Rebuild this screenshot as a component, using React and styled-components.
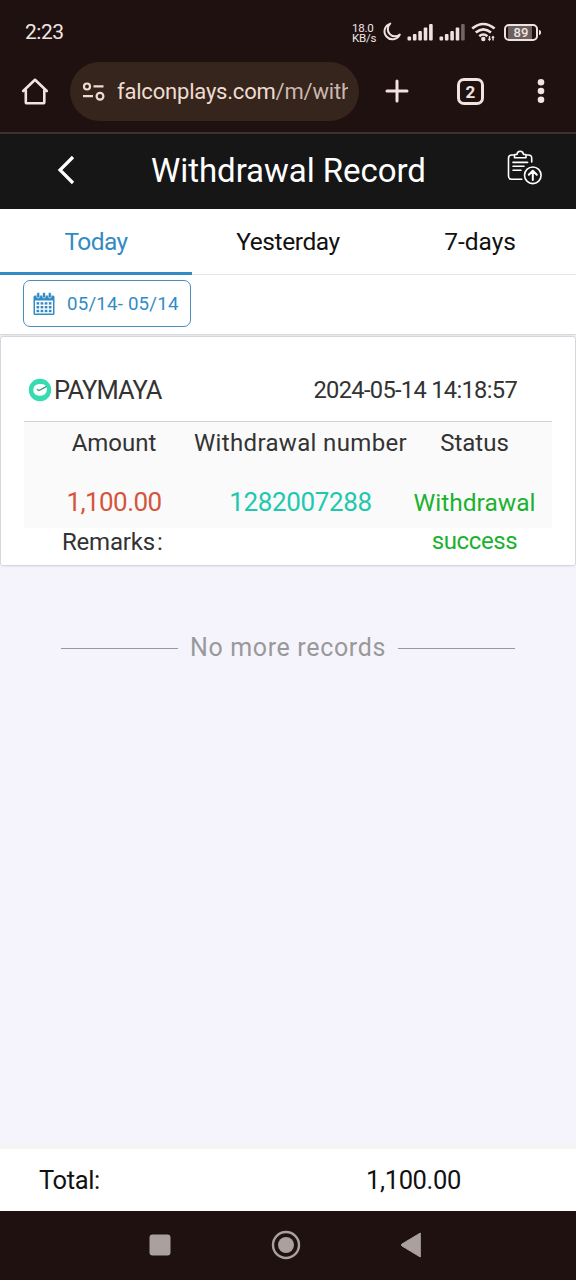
import React, { useState } from 'react';
import styled, { createGlobalStyle } from 'styled-components';

const tabList = [
  { id: 'today', title: 'Today', size: 24.5, spacing: -0.6 },
  { id: 'yesterday', title: 'Yesterday', size: 24.5, spacing: -0.4 },
  { id: 'week', title: '7-days', size: 24.5, spacing: 0 },
];

const record = {
  method: 'PAYMAYA',
  date: '2024-05-14 14:18:57',
  amount: '1,100.00',
  number: '1282007288',
};

const App = () => {
  const [activeTab, setActiveTab] = useState('today');

  return (
    <Screen>
      <GlobalStyle />
      <StatusBar />
      <BrowserBar />
      <Header>
        <BackIcon />
        <Text size={33} spacing={-0.05}>Withdrawal Record</Text>
        <ReportIcon />
      </Header>
      <Tabs>
        {tabList.map(tab => (
          <Tab key={tab.id} $active={tab.id === activeTab} onClick={() => setActiveTab(tab.id)}>
            <Text size={tab.size} spacing={tab.spacing}>{tab.title}</Text>
          </Tab>
        ))}
      </Tabs>
      <Filter>
        <DateButton>
          <CalendarIcon />
          <Text size={18.7} spacing={0.2}>05/14- 05/14</Text>
        </DateButton>
      </Filter>
      <Content>
        <RecordCard content={record} />
        <EndOfList>
          <Rule />
          <Text size={25} spacing={0.65}>No more records</Text>
          <Rule />
        </EndOfList>
      </Content>
      <Summary>
        <Text size={25.5} spacing={-0.4}>Total:</Text>
        <Text size={25.5} spacing={-0.35}>1,100.00</Text>
      </Summary>
      <NavigationBar />
    </Screen>
  );
};

export default App;

const StatusBar = () => (
  <StatusWrapper>
    <Text size={21} spacing={-0.5}>2:23</Text>
    <StatusIcons>
      <Speed>
        <span>18.0</span>
        <span>KB/s</span>
      </Speed>
      <svg width="20" height="20" viewBox="0 0 20 20" fill="none" stroke="#efe3e1" strokeWidth="2" strokeLinejoin="round">
        <path d="M8.3 1.6A8 8 0 1 0 17.8 12.6A7.2 7.2 0 0 1 8.3 1.6Z" />
      </svg>
      <Signal strength={5} />
      <Signal strength={4} />
      <svg width="26" height="20" viewBox="0 0 26 20" fill="none" stroke="#efe3e1" strokeWidth="2.6">
        <path d="M1.2 6.6Q12.3-2.6 23.6 6.6" />
        <path d="M4.8 10.6Q12.3 4.2 20 10.6" />
        <path d="M8.3 14.2Q12.3 10.8 16.4 14.2" />
        <circle cx="12.3" cy="17" r="2.2" fill="#efe3e1" stroke="none" />
        <path d="M18.5 14V18M22 14.5V18.5" strokeWidth="1.4" />
        <path d="M16.7 16.7h3.4l-1.6 2.6zM20.3 16h3.4l-1.7-2.6z" fill="#efe3e1" stroke="none" />
      </svg>
      <Battery>89</Battery>
    </StatusIcons>
  </StatusWrapper>
);

const Signal = ({ strength }) => (
  <svg width="27" height="18" viewBox="0 0 27 18" fill="#efe3e1">
    {[4, 6.5, 9.5, 13, 16.5].map((height, i) => (
      <rect key={height} x={0.5 + i * 5.4} y={17.5 - height} width="3.6" height={height} rx="1" opacity={i < strength ? 1 : 0.4} />
    ))}
  </svg>
);

const BrowserBar = () => (
  <BrowserWrapper>
    <svg width="28" height="28" viewBox="0 0 28 28" fill="none" stroke="#f3e3e0" strokeWidth="2.6" strokeLinejoin="round" strokeLinecap="round">
      <path d="M2.2 14L14 2.8L25.8 14M4.8 13V25Q4.8 26.3 6.1 26.3H22Q23.3 26.3 23.3 25V13" />
    </svg>
    <AddressBar>
      <svg width="24" height="20" viewBox="0 0 24 20" fill="none" stroke="#f0dccf" strokeWidth="2.2">
        <circle cx="5" cy="5.5" r="3" />
        <path d="M11.5 5.3H21.5M1 15.2H11" />
        <circle cx="18" cy="15.2" r="3.4" />
      </svg>
      <Url>
        falconplays.com<Path>/m/withdrawRecord</Path>
      </Url>
    </AddressBar>
    <BrowserActions>
      <svg width="24" height="24" viewBox="0 0 24 24" stroke="#f3e3e0" strokeWidth="3" strokeLinecap="round">
        <path d="M12 2V22M2 12H22" />
      </svg>
      <TabCount>2</TabCount>
      <svg width="8" height="26" viewBox="0 0 8 26" fill="#f3e3e0">
        <circle cx="4" cy="4.3" r="3.3" />
        <circle cx="4" cy="13" r="3.3" />
        <circle cx="4" cy="21.8" r="3.3" />
      </svg>
    </BrowserActions>
  </BrowserWrapper>
);

const RecordCard = ({ content }) => (
  <Card>
    <CardHeader>
      <Method>
        <PaymayaIcon />
        <Text size={25.5} spacing={-0.9}>{content.method}</Text>
      </Method>
      <Text size={23.7} spacing={-0.7}>{content.date}</Text>
    </CardHeader>
    <Details>
      <Cell><Text size={24}>Amount</Text></Cell>
      <Cell><Text size={24} spacing={0.35}>Withdrawal number</Text></Cell>
      <Cell><Text size={24}>Status</Text></Cell>
      <Cell color="#d5553c"><Text size={26} spacing={-0.6}>{content.amount}</Text></Cell>
      <Cell color="#20c9ae"><Text size={26} spacing={-0.35}>{content.number}</Text></Cell>
      <Cell color="#1bb22f">
        <Text size={24.5}>Withdrawal</Text>
        <Text size={24} spacing={-0.4}>success</Text>
      </Cell>
    </Details>
    <Remarks>
      <Text size={24} spacing={-0.2}>Remarks</Text>
      <Text size={24}>:</Text>
    </Remarks>
  </Card>
);

const NavigationBar = () => (
  <NavWrapper>
    <svg width="22" height="22" viewBox="0 0 22 22" fill="#aaa09f">
      <rect x="0.5" y="0.5" width="21" height="21" rx="3" />
    </svg>
    <svg width="30" height="30" viewBox="0 0 30 30" fill="#aaa09f">
      <circle cx="15" cy="15" r="13" fill="none" stroke="#aaa09f" strokeWidth="2.4" />
      <circle cx="15" cy="15" r="8" />
    </svg>
    <svg width="20" height="26" viewBox="0 0 20 26" fill="#aaa09f" stroke="#aaa09f" strokeWidth="1" strokeLinejoin="round">
      <path d="M19.3 1V25L.7 13.8Q0 13 .7 12.2Z" />
    </svg>
  </NavWrapper>
);

const BackIcon = () => (
  <svg width="18" height="30" viewBox="0 0 18 30" fill="none" stroke="#fff" strokeWidth="3.2">
    <path d="M16 2L3 15L16 28" />
  </svg>
);

const ReportIcon = () => (
  <svg width="36" height="36" viewBox="0 0 36 36" fill="none" stroke="#fff" strokeWidth="1.6" strokeLinecap="round" strokeLinejoin="round">
    <path d="M7 5H4.8Q1.5 5 1.5 8.2V26Q1.5 29.3 4.8 29.3H14.8M20 5H21.3Q24.7 5 24.7 8.2V12" />
    <path d="M7.5 7.8V4.5H10Q10.2 1.2 13.2 1.2Q16.2 1.2 16.5 4.5H19V7.8Z" />
    <path d="M6 12.4H20.6M6 16.3H17M6 20.3H14" />
    <circle cx="25.8" cy="25.3" r="8.3" />
    <path d="M25.8 30V21M21.8 24.8L25.8 20.8L29.8 24.8" strokeWidth="2" />
  </svg>
);

const CalendarIcon = () => (
  <svg width="22" height="24" viewBox="0 0 22 24" fill="#338bc4">
    <path d="M2 3.5H20Q21.5 3.5 21.5 5V21.5Q21.5 23 20 23H2Q.5 23 .5 21.5V5Q.5 3.5 2 3.5ZM2 8.5V21.5H20V8.5Z" fillRule="evenodd" />
    {[5.2, 11, 16.8].map(x => (
      <rect key={x} x={x - 1.5} y="0.4" width="3" height="5.6" rx="1.4" stroke="#fff" strokeWidth="0.6" />
    ))}
    {[10.2, 14, 17.8].map(y => [3.5, 7.6, 11.7, 15.8].map(x => (
      <rect key={`${x}-${y}`} x={x} y={y} width="2.7" height="2.4" />
    )))}
  </svg>
);

const PaymayaIcon = () => (
  <svg width="24" height="24" viewBox="0 0 24 24">
    <circle cx="12" cy="12" r="11.2" fill="#35dcb0" />
    <path d="M5.3 11Q6 6 12.5 6Q19.2 6 19 11.5Q18.5 17.8 11.5 17.8Q5 17.5 5.3 11Z" fill="#fff" />
    <path d="M8.8 11.2L11 12.6L18.7 8.4" fill="none" stroke="#299b81" strokeWidth="1.2" />
  </svg>
);

const GlobalStyle = createGlobalStyle`
  * {
    box-sizing: border-box;
  }

  body {
    margin: 0;
    font-family: Roboto, "Noto Sans", sans-serif;
  }

  svg {
    display: block;
    flex-shrink: 0;
  }

  button {
    padding: 0;
    border: 0;
    background: none;
    font-family: inherit;
  }
`

const Screen = styled.div`
  display: flex;
  flex-direction: column;
  width: 576px;
  height: 1280px;
  background: #f5f4fd;
  overflow: hidden;
`

const Text = styled.span.withConfig({ shouldForwardProp: prop => !['size', 'spacing'].includes(prop) })`
  font-size: ${({ size }) => size}px;
  letter-spacing: ${({ spacing = 0 }) => spacing}px;
  white-space: nowrap;
`

const StatusWrapper = styled.div`
  display: flex;
  justify-content: space-between;
  align-items: center;
  height: 64px;
  padding: 0 35px 0 25px;
  background: #1e1110;
  color: #f1e5e3;
`

const StatusIcons = styled.div`
  display: flex;
  align-items: center;
  gap: 5px;
`

const Speed = styled.div`
  display: flex;
  flex-direction: column;
  width: 25px;
  padding-top: 2px;
  font-size: 11.5px;
  letter-spacing: -0.2px;
  line-height: 10.5px;
`

const Battery = styled.div`
  position: relative;
  width: 34px;
  height: 17px;
  margin: 0 3px 0 2px;
  border: 2px solid #efe3e1;
  border-radius: 5px;
  background: linear-gradient(90deg, transparent 2px, #6b605f 2px, #6b605f 26px, transparent 26px);
  font-size: 13px;
  font-weight: 500;
  line-height: 13px;
  text-align: center;

  &::after {
    content: '';
    position: absolute;
    top: 4px;
    right: -5px;
    width: 2px;
    height: 5px;
    border-radius: 0 2px 2px 0;
    background: #efe3e1;
  }
`

const BrowserWrapper = styled.div`
  display: flex;
  align-items: center;
  height: 70px;
  padding: 0 31px 14px 21px;
  border-bottom: 2px solid #412f31;
  background: #1e1110;
`

const AddressBar = styled.div`
  display: flex;
  align-items: center;
  gap: 11px;
  width: 289px;
  height: 59px;
  margin-left: 21px;
  padding: 0 11px 0 12px;
  border-radius: 30px;
  background: #35251d;
`

const Url = styled.div`
  flex: 1;
  overflow: hidden;
  color: #f0dccf;
  font-size: 22px;
  letter-spacing: -0.2px;
  white-space: nowrap;
`

const Path = styled.span`
  color: #cbb8ac;
`

const BrowserActions = styled.div`
  display: flex;
  flex: 1;
  align-items: center;
  margin-left: 26px;
  gap: 48px;

  svg:last-child {
    margin-left: auto;
  }
`

const TabCount = styled.div`
  width: 27px;
  height: 27px;
  border: 3px solid #f3e3e0;
  border-radius: 7px;
  color: #f3e3e0;
  font-size: 17px;
  font-weight: 700;
  line-height: 22px;
  text-align: center;
`

const Header = styled.header`
  display: flex;
  align-items: center;
  height: 75px;
  padding: 0 33px 3px 57px;
  background: #161616;
  color: #fff;

  ${Text} {
    margin-left: 76px;
  }

  svg:last-child {
    margin: 0 0 5px auto;
  }
`

const Tabs = styled.nav`
  display: flex;
  height: 66px;
  border-bottom: 1px solid #e4e4e4;
  background: #fff;
`

const Tab = styled.button`
  flex: 1;
  height: 66px;
  padding-top: 1px;
  border-bottom: 3px solid ${({ $active }) => ($active ? '#338bc4' : 'transparent')};
  color: ${({ $active }) => ($active ? '#338bc4' : '#111')};
`

const Filter = styled.div`
  height: 60px;
  padding: 5px 23px;
  border-bottom: 1px solid #ddd;
  background: #fff;
`

const DateButton = styled.button`
  display: flex;
  align-items: center;
  gap: 12px;
  width: 168px;
  height: 47px;
  padding-left: 9px;
  border: 1px solid #4a8fb8;
  border-radius: 7px;
  color: #338bc4;
`

const Content = styled.main`
  flex: 1;
  padding-top: 2px;
  border-bottom: 6px solid #f4f4f6;
`

const Card = styled.section`
  height: 228px;
  margin: 0 1px;
  padding: 24px 23px 0;
  border-radius: 2px;
  background: #fff;
  box-shadow: 0 0 3px rgba(0, 0, 0, 0.35);
  color: #333;
`

const CardHeader = styled.div`
  display: flex;
  align-items: center;
  justify-content: space-between;
  height: 61px;
  padding: 0 35px 2px 4px;
  border-bottom: 1px solid #d3d3d3;
`

const Method = styled.div`
  display: flex;
  align-items: center;
  gap: 2px;
`

const Details = styled.div`
  display: grid;
  grid-template-columns: 180px 193px 155px;
  grid-template-rows: 39px 67px;
  height: 106px;
  background: #fafafa;
`

const Cell = styled.div.withConfig({ shouldForwardProp: prop => prop !== 'color' })`
  display: flex;
  flex-direction: column;
  align-items: center;
  padding-top: ${({ color }) => (color ? 22 : 2)}px;
  color: ${({ color }) => color || '#333'};
  line-height: 39px;
`

const Remarks = styled.div`
  display: flex;
  align-items: center;
  gap: 2px;
  height: 27px;
  padding-left: 38px;
`

const EndOfList = styled.div`
  display: flex;
  align-items: center;
  justify-content: center;
  gap: 12px;
  height: 40px;
  margin-top: 62px;
  color: #999;
`

const Rule = styled.div`
  width: 117px;
  height: 1px;
  margin-top: 3px;
  background: #999;
`

const Summary = styled.div`
  display: grid;
  grid-template-columns: 327px 1fr;
  align-items: center;
  height: 62px;
  padding-left: 39px;
  background: #fff;
  color: #111;
`

const NavWrapper = styled.footer`
  display: flex;
  align-items: center;
  gap: 100px;
  height: 69px;
  padding: 0 0 1px 149px;
  background: #1e1110;
`
